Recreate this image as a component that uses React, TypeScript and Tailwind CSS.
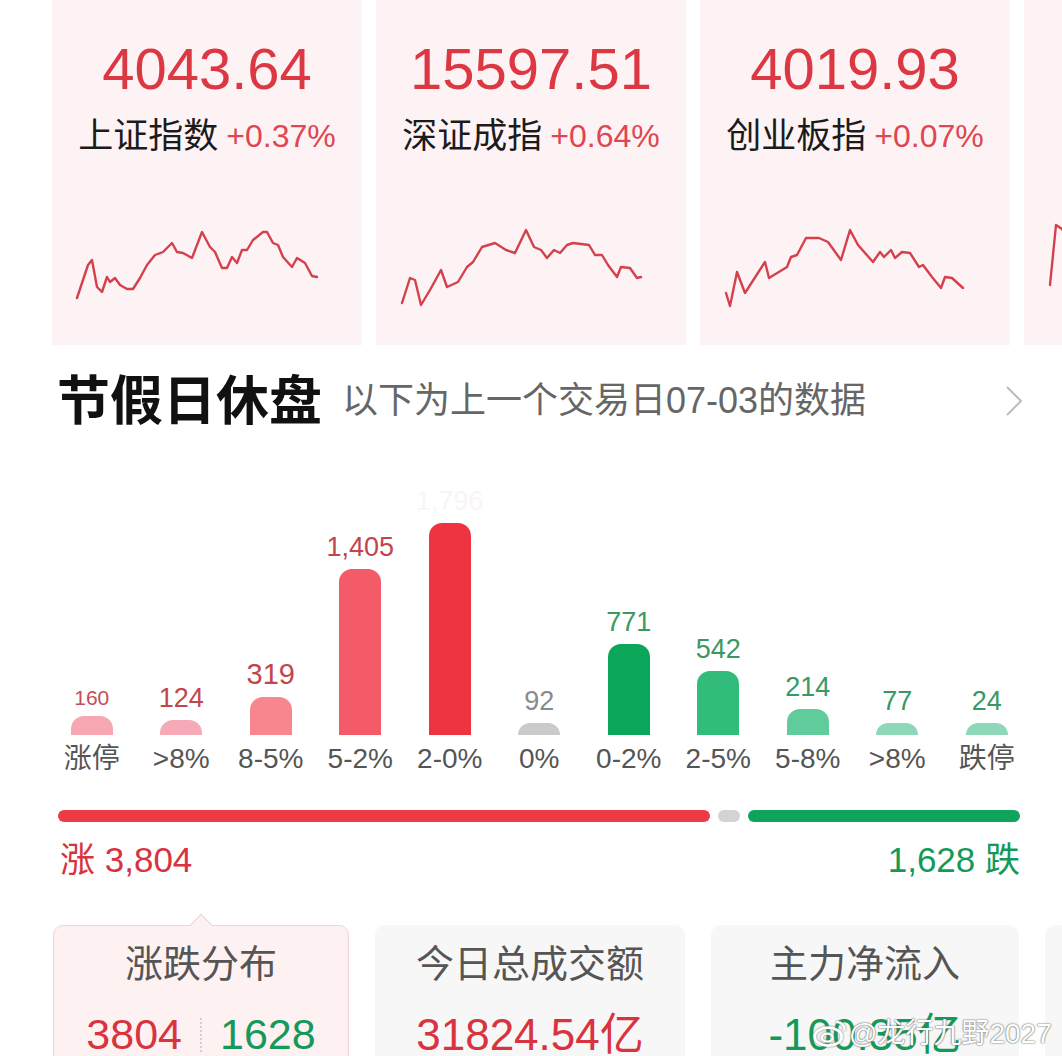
import React from 'react';

type IndexCard = {
  value: string;
  name: string;
  change: string;
  left: number;
  pts: string;
};

// sparkline points are in page coordinates; each card's viewBox starts at its own left edge
const indices: IndexCard[] = [
  {
    value: '4043.64',
    name: '上证指数',
    change: '+0.37%',
    left: 52,
    pts: '77,278 88,245 92,240 97,267 102,272 107,257 110,262 115,258 120,265 127,269 133,269 140,258 147,245 155,235 163,232 172,223 177,232 183,233 192,238 202,212 210,227 215,232 222,248 227,248 232,237 237,243 242,230 247,230 253,220 263,212 267,212 273,223 278,225 283,237 292,247 297,238 305,243 312,256 317,257',
  },
  {
    value: '15597.51',
    name: '深证成指',
    change: '+0.64%',
    left: 376,
    pts: '402,283 410,258 415,260 421,285 430,270 441,250 447,267 458,262 467,247 473,242 482,227 495,223 506,230 515,233 526,210 534,227 541,230 547,238 554,230 560,233 567,225 573,223 589,225 595,235 602,235 608,245 617,257 621,247 630,248 637,258 641,257',
  },
  {
    value: '4019.93',
    name: '创业板指',
    change: '+0.07%',
    left: 700,
    pts: '726,273 730,286 737,252 745,273 765,242 769,258 787,247 791,237 797,235 806,218 819,218 828,222 841,240 850,210 858,225 873,242 880,232 884,237 891,230 895,238 902,232 910,233 919,247 923,245 932,257 941,268 945,257 952,258 963,268',
  },
];

type Bar = {
  label: string;
  value: string;
  h: number;
  bar: string;
  text: string;
};

const bars: Bar[] = [
  { label: '涨停', value: '160', h: 19, bar: 'bg-[#f7a7b2]', text: 'text-[#c64d57] text-[21px]' },
  { label: '>8%', value: '124', h: 15, bar: 'bg-[#f6a9b7]', text: 'text-[#c2454e] text-[27px]' },
  { label: '8-5%', value: '319', h: 38, bar: 'bg-[#f8868f]', text: 'text-[#c2454e] text-[29px]' },
  { label: '5-2%', value: '1,405', h: 166, bar: 'bg-[#f35b69]', text: 'text-[#c2454e] text-[27px]' },
  { label: '2-0%', value: '1,796', h: 212, bar: 'bg-[#ee3441]', text: 'text-[#faf5f5] text-[27px]' },
  { label: '0%', value: '92', h: 12, bar: 'bg-[#cacaca]', text: 'text-[#8a8a8a] text-[27px]' },
  { label: '0-2%', value: '771', h: 91, bar: 'bg-[#0aa65a]', text: 'text-[#3a9862] text-[27px]' },
  { label: '2-5%', value: '542', h: 64, bar: 'bg-[#32bc7c]', text: 'text-[#3a9862] text-[27px]' },
  { label: '5-8%', value: '214', h: 26, bar: 'bg-[#60cc9c]', text: 'text-[#3a9862] text-[27px]' },
  { label: '>8%', value: '77', h: 12, bar: 'bg-[#8fd7b9]', text: 'text-[#3a9862] text-[27px]' },
  { label: '跌停', value: '24', h: 12, bar: 'bg-[#8fd7b9]', text: 'text-[#3a9862] text-[27px]' },
];

function Sparkline({ left, pts }: { left: number; pts: string }) {
  return (
    <svg width={310} height={110} viewBox={`${left} 190 310 110`} className="block">
      <polyline
        points={pts}
        fill="none"
        stroke="#d4404c"
        strokeWidth={2.4}
        strokeLinejoin="round"
        strokeLinecap="round"
      />
    </svg>
  );
}

export default function App() {
  return (
    <div className="relative w-[1062px] h-[1056px] overflow-hidden bg-white font-['Liberation_Sans','Noto_Sans_CJK_SC',sans-serif]">
      {/* index cards strip */}
      <div className="flex gap-[14px] pl-[52px] h-[345px]">
        {indices.map((ix) => (
          <div key={ix.name} className="w-[310px] shrink-0 bg-[#fdf3f4] flex flex-col items-center">
            <div className="pt-[40px] text-[58px] leading-none text-[#dc3843]">{ix.value}</div>
            <div className="mt-[20px] h-[36px] flex items-center gap-[8px] whitespace-nowrap">
              <span className="text-[35px] text-[#1b1b1b]">{ix.name}</span>
              <span className="text-[32px] text-[#e04651]">{ix.change}</span>
            </div>
            <div className="mt-[56px] self-stretch">
              <Sparkline left={ix.left} pts={ix.pts} />
            </div>
          </div>
        ))}
        {/* next card, scrolled mostly out of view */}
        <div className="w-[310px] shrink-0 bg-[#fdf3f4] pt-[192px]">
          <Sparkline left={1024} pts="1050,283 1056,223 1062,227 1070,240 1080,236" />
        </div>
      </div>

      {/* section header */}
      <div className="mt-[31px] h-[50px] flex items-center pl-[57px] pr-[40px]">
        <span className="text-[53px] leading-none font-bold text-[#111]">节假日休盘</span>
        <span className="ml-[20px] text-[36px] leading-none text-[#666]">以下为上一个交易日07-03的数据</span>
        <svg width={16} height={30} viewBox="0 0 16 30" className="ml-auto">
          <polyline points="1,1 15,15 1,29" fill="none" stroke="#bdbdbd" strokeWidth={2} />
        </svg>
      </div>

      {/* up / down distribution */}
      <div className="flex pl-[47px] h-[309px]">
        {bars.map((b, i) => (
          <div key={i} className="w-[89.5px] shrink-0 flex flex-col items-center justify-end">
            <div className={`leading-none mb-[8px] ${b.text}`}>{b.value}</div>
            <div className={`w-[42px] rounded-t-[13px] ${b.bar}`} style={{ height: b.h }} />
          </div>
        ))}
      </div>
      <div className="flex pl-[47px] mt-[9px] h-[30px]">
        {bars.map((b, i) => (
          <div key={i} className="w-[89.5px] shrink-0 text-center text-[28px] leading-[30px] text-[#555] whitespace-nowrap">
            {b.label}
          </div>
        ))}
      </div>

      {/* ratio bar */}
      <div className="mt-[36px] mx-[42px] ml-[58px] flex items-center gap-[8px] h-[12px]">
        <div className="h-[12px] w-[652px] rounded-full bg-[#ee3a46]" />
        <div className="h-[12px] w-[22px] rounded-full bg-[#d3d3d3]" />
        <div className="h-[12px] flex-1 rounded-full bg-[#10a35d]" />
      </div>
      <div className="mt-[20px] mx-[42px] ml-[60px] flex justify-between h-[34px] items-center text-[35px] leading-none">
        <span className="text-[#d8333f]">涨 3,804</span>
        <span className="text-[#13995a]">1,628 跌</span>
      </div>

      {/* summary tabs */}
      <div className="mt-[49px] flex pl-[53px] gap-[26px]">
        <div className="relative w-[296px] h-[160px] shrink-0 rounded-[10px] border-[1.5px] border-[#f1d2d6] bg-[#fdf1f2] flex flex-col items-center">
          <div className="absolute -top-[9px] left-[139px] w-[16px] h-[16px] rotate-45 bg-[#fdf1f2] border-l-[1.5px] border-t-[1.5px] border-[#f1d2d6]" />
          <div className="mt-[19px] text-[38px] leading-none text-[#555]">涨跌分布</div>
          <div className="mt-[30px] flex items-center text-[43px] leading-none">
            <span className="text-[#d8333f]">3804</span>
            <span className="mx-[18px] h-[34px] border-l-2 border-dotted border-[#cfcfcf]" />
            <span className="text-[#13995a]">1628</span>
          </div>
        </div>
        <div className="w-[310px] h-[160px] shrink-0 rounded-[10px] bg-[#f7f7f7] flex flex-col items-center">
          <div className="mt-[20px] text-[38px] leading-none text-[#555]">今日总成交额</div>
          <div className="mt-[30px] text-[44px] leading-none text-[#d8333f]">31824.54亿</div>
        </div>
        <div className="w-[308px] h-[160px] shrink-0 rounded-[10px] bg-[#f7f7f7] flex flex-col items-center">
          <div className="mt-[20px] text-[38px] leading-none text-[#555]">主力净流入</div>
          <div className="mt-[30px] text-[44px] leading-none text-[#13995a]">-100.35亿</div>
        </div>
        <div className="w-[308px] h-[160px] shrink-0 rounded-[10px] bg-[#f7f7f7]" />
      </div>

      {/* watermark */}
      <div className="absolute left-[812px] top-[1018px] flex items-center gap-[1px] whitespace-nowrap">
        <svg width={36} height={32} viewBox="0 0 40 34" className="drop-shadow-[0_0_1px_#777]">
          <ellipse cx={18} cy={20} rx={15} ry={10} fill="none" stroke="#fff" strokeWidth={3} />
          <ellipse cx={17} cy={21} rx={6} ry={4.5} fill="none" stroke="#fff" strokeWidth={2.5} />
          <path d="M27 4 a8 8 0 0 1 9 9" fill="none" stroke="#fff" strokeWidth={2.5} />
        </svg>
        <span className="text-[28px] leading-none text-white [text-shadow:0_0_2px_#666,0_0_1px_#666]">@龙行九野2027</span>
      </div>
    </div>
  );
}
